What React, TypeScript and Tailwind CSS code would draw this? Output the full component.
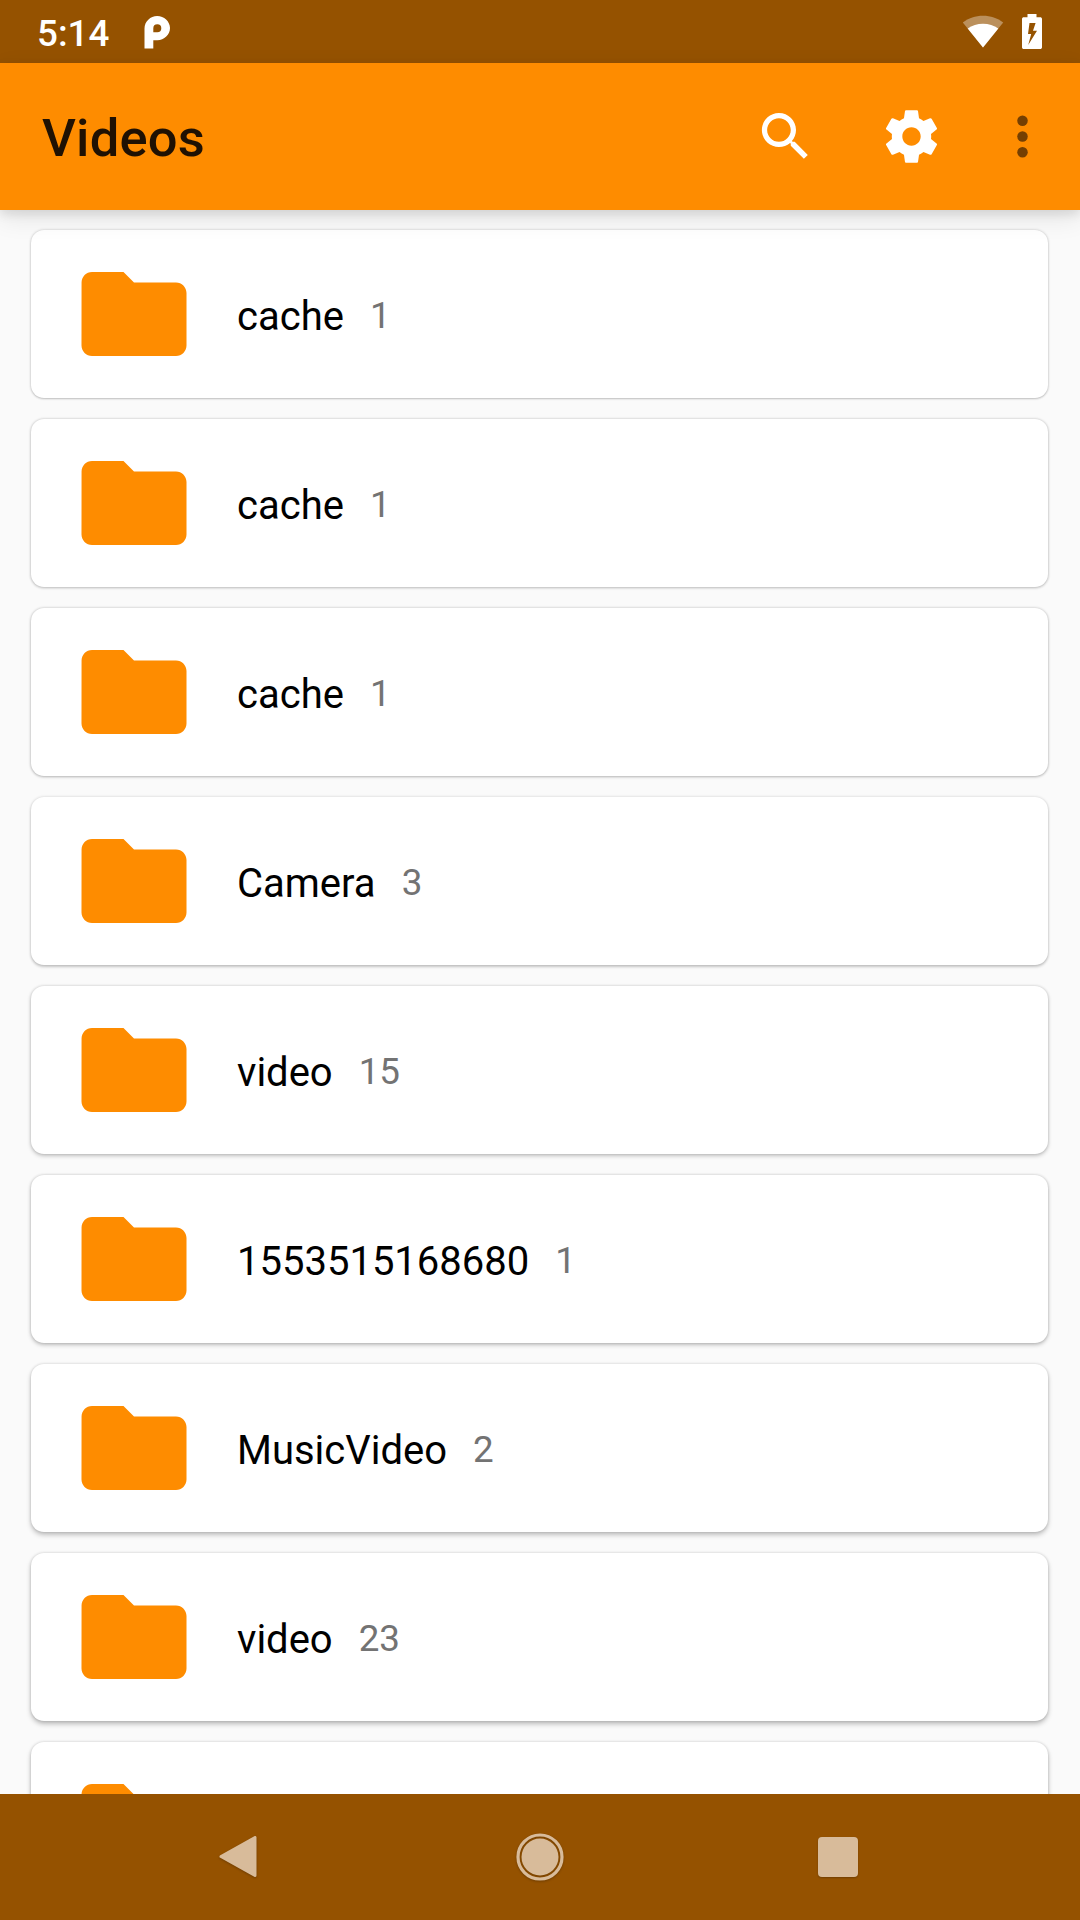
const folders = [
  { name: "cache", count: 1, shadow: "shadow-[0_1px_2px_rgba(0,0,0,0.16),0_0_3px_rgba(0,0,0,0.20)]" },
  { name: "cache", count: 1, shadow: "shadow-[0_1px_3px_rgba(0,0,0,0.18),0_0_3px_rgba(0,0,0,0.19)]" },
  { name: "cache", count: 1, shadow: "shadow-[0_1px_3px_rgba(0,0,0,0.21),0_0_3px_rgba(0,0,0,0.18)]" },
  { name: "Camera", count: 3, shadow: "shadow-[0_2px_3px_rgba(0,0,0,0.19),0_0_3px_rgba(0,0,0,0.17)]" },
  { name: "video", count: 15, shadow: "shadow-[0_2px_4px_rgba(0,0,0,0.21),0_0_3px_rgba(0,0,0,0.17)]" },
  { name: "1553515168680", count: 1, shadow: "shadow-[0_2px_4px_rgba(0,0,0,0.23),0_0_3px_rgba(0,0,0,0.17)]" },
  { name: "MusicVideo", count: 2, shadow: "shadow-[0_3px_5px_rgba(0,0,0,0.23),0_0_3px_rgba(0,0,0,0.16)]" },
  { name: "video", count: 23, shadow: "shadow-[0_3px_5px_rgba(0,0,0,0.25),0_0_3px_rgba(0,0,0,0.16)]" },
  { name: "", count: null, shadow: "shadow-[0_3px_5px_rgba(0,0,0,0.25),0_0_3px_rgba(0,0,0,0.16)]" },
];

function StatusBar() {
  return (
    <div className="flex h-[63px] shrink-0 items-center bg-[#955200] pl-[37px] pr-[38px] text-white">
      <span className="pt-[5px] text-[36.75px] font-medium leading-none">5:14</span>
      <svg aria-hidden="true" className="ml-[35px] h-[34px] w-[28px]" viewBox="0 0 28 34">
        <path
          fill="currentColor"
          fillRule="evenodd"
          d="M.5 33.500V13.500C.5 6.500 6.400 1 13.200 1S26 6.500 26 13 20.300 25.200 13.300 25.200H9.300V33.500ZM9.300 17.200V13.200A4 4 0 1 1 13.300 17.200Z"
        />
      </svg>
      <div className="ml-auto flex items-center gap-[18px]">
        <svg aria-hidden="true" className="h-[34px] w-[42px]" viewBox="0 0 42 34">
          <path fill="currentColor" fillOpacity="0.36" d="M21 32.500.800 7.500C6.500 3.200 13.500.800 21 .800S35.500 3.200 41.200 7.500Z" />
          <path fill="currentColor" d="M21 32.500 5.700 13.600C10 10.500 15.300 8.700 21 8.700s11 1.800 15.300 4.900Z" />
        </svg>
        <svg aria-hidden="true" className="h-[35px] w-[20px]" viewBox="0 0 20 35">
          <path
            fill="currentColor"
            fillRule="evenodd"
            d="M5.500 0h9v3.200H18.200c1 0 1.800.7 1.800 1.700V33.200c0 1-.8 1.800-1.800 1.800H1.800C.8 35 0 34.200 0 33.200V4.900C0 3.900.8 3.200 1.800 3.200H5.500ZM7.500 9 6 20H9.200L6.200 31 15 16.800H11L13.600 9Z"
          />
        </svg>
      </div>
    </div>
  );
}

function AppBar() {
  return (
    <header className="z-10 flex h-[147px] shrink-0 items-center bg-[#fe8c00] pl-[42px] pr-[26px] shadow-[0_4px_10px_rgba(0,0,0,0.10),0_8px_24px_rgba(0,0,0,0.09)]">
      <h1 className="mt-[3px] text-[52.5px] font-medium leading-none tracking-[0.2px] text-[#1f1103]">Videos</h1>
      <svg aria-hidden="true" className="ml-auto size-[63px] text-white" viewBox="0 0 24 24">
        <path
          fill="currentColor"
          d="M15.500 14h-.79l-.28-.27C15.410 12.590 16 11.110 16 9.500 16 5.910 13.090 3 9.500 3S3 5.910 3 9.500 5.910 16 9.500 16c1.610 0 3.090-.59 4.230-1.570l.27.28v.79l5 4.990L20.490 19l-4.990-5zm-6 0C7.010 14 5 11.990 5 9.500S7.010 5 9.500 5 14 7.010 14 9.500 11.990 14 9.500 14z"
        />
      </svg>
      <svg aria-hidden="true" className="ml-[63px] size-[63px] text-white" viewBox="0 0 24 24">
        <path
          fill="currentColor"
          d="M19.430 12.980c.04-.32.07-.64.07-.98s-.03-.66-.07-.98l2.110-1.650c.19-.15.24-.42.12-.64l-2-3.460c-.12-.22-.39-.3-.61-.22l-2.490 1c-.52-.4-1.080-.73-1.690-.98l-.38-2.650C14.460 2.180 14.250 2 14 2h-4c-.25 0-.46.18-.49.42l-.38 2.650c-.61.25-1.170.59-1.690.98l-2.490-1c-.23-.09-.49 0-.61.22l-2 3.460c-.13.22-.07.49.12.64l2.110 1.650c-.04.32-.07.65-.07.98s.03.66.07.98l-2.110 1.650c-.19.15-.24.42-.12.64l2 3.460c.12.22.39.3.61.22l2.490-1c.52.4 1.080.73 1.690.98l.38 2.650c.03.24.24.42.49.42h4c.25 0 .46-.18.49-.42l.38-2.650c.61-.25 1.170-.59 1.690-.98l2.490 1c.23.09.49 0 .61-.22l2-3.460c.12-.22.07-.49-.12-.64l-2.110-1.650zM12 15.500c-1.930 0-3.500-1.570-3.500-3.500s1.570-3.500 3.500-3.500 3.500 1.570 3.500 3.500-1.570 3.500-3.500 3.500z"
        />
      </svg>
      <svg aria-hidden="true" className="ml-[48px] size-[63px] text-[#743f02]" viewBox="0 0 24 24">
        <circle cx="12" cy="6" r="2" fill="currentColor" />
        <circle cx="12" cy="12" r="2" fill="currentColor" />
        <circle cx="12" cy="18" r="2" fill="currentColor" />
      </svg>
    </header>
  );
}

function FolderIcon() {
  return (
    <svg aria-hidden="true" className="size-[126px] shrink-0 text-[#fe8c00]" viewBox="0 0 24 24">
      <path
        fill="currentColor"
        d="M10 4H4c-1.100 0-1.990.9-1.990 2L2 18c0 1.100.9 2 2 2h16c1.100 0 2-.9 2-2V8c0-1.100-.9-2-2-2h-8l-2-2z"
      />
    </svg>
  );
}

function NavBar() {
  return (
    <nav className="z-10 flex h-[126px] shrink-0 items-center justify-between bg-[#955200] pl-[218px] pr-[222px] text-[#d8bb9a]">
      <svg aria-hidden="true" className="h-[48px] w-[40px] drop-shadow-[0_1px_1px_rgba(0,0,0,0.25)]" viewBox="0 0 40 48">
        <path
          fill="currentColor"
          stroke="currentColor"
          strokeWidth="3"
          strokeLinejoin="round"
          d="M3 23.500 37 4.500V42.500Z"
        />
      </svg>
      <svg aria-hidden="true" className="ml-[3px] size-[48px] drop-shadow-[0_1px_1px_rgba(0,0,0,0.25)]" viewBox="0 0 48 48">
        <circle cx="24" cy="24" r="22" fill="none" stroke="currentColor" strokeWidth="3.200" />
        <circle cx="24" cy="24" r="18.500" fill="currentColor" />
      </svg>
      <div className="size-[40px] rounded-[4px] bg-current shadow-[0_1px_2px_rgba(0,0,0,0.25)]" />
    </nav>
  );
}

export default function App() {
  return (
    <div className="flex h-[1920px] w-[1080px] flex-col overflow-hidden bg-[#fafafa] font-[Roboto,sans-serif]">
      <StatusBar />
      <AppBar />
      <main className="min-h-0 flex-1 overflow-hidden pl-[31px] pr-[32px] pt-[20px]">
        <ul className="flex flex-col gap-[21px]">
          {folders.map((folder, index) => (
            <li
              key={index}
              className={`flex h-[168px] shrink-0 items-center rounded-[13px] bg-white pl-[40px] ${folder.shadow}`}
            >
              <FolderIcon />
              <span className="ml-[40px] pt-[5px] text-[40px] leading-none text-black">{folder.name}</span>
              <span className="ml-[26px] pt-[5px] text-[36.75px] leading-none text-[#737373]">{folder.count}</span>
            </li>
          ))}
        </ul>
      </main>
      <NavBar />
    </div>
  );
}
